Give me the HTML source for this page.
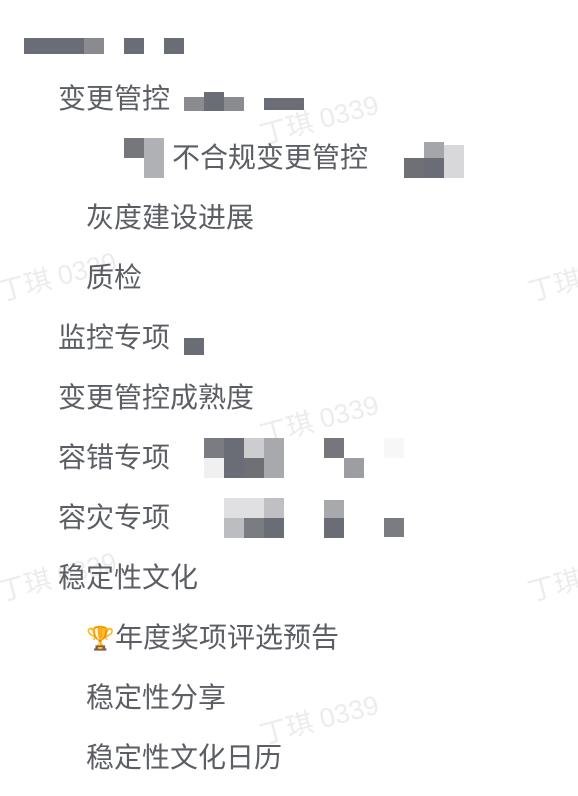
<!DOCTYPE html>
<html><head><meta charset="utf-8"><style>
html,body{margin:0;padding:0;background:#fff;width:578px;height:796px;overflow:hidden;position:relative}
.t{position:absolute;font-family:"Liberation Sans","Noto Sans CJK SC",sans-serif;font-size:28px;color:#5b5e64;line-height:32px;white-space:nowrap}
.b{position:absolute}
.w{position:absolute;font-family:"Liberation Sans","Noto Sans CJK SC",sans-serif;font-size:27px;color:#ececec;transform:rotate(-15deg);white-space:nowrap}
.e{font-size:23px;display:inline-block;width:29px;vertical-align:1px}
</style></head><body>
<div class="w" style="left:258px;top:98px">丁琪 0339</div>
<div class="w" style="left:-4px;top:255px">丁琪 0339</div>
<div class="w" style="left:526px;top:255px">丁琪 0339</div>
<div class="w" style="left:258px;top:398px">丁琪 0339</div>
<div class="w" style="left:-4px;top:555px">丁琪 0339</div>
<div class="w" style="left:526px;top:555px">丁琪 0339</div>
<div class="w" style="left:258px;top:698px">丁琪 0339</div>

<div class="b" style="left:24px;top:38px;width:60px;height:16px;background:#6a6d75"></div>
<div class="b" style="left:84px;top:38px;width:20px;height:16px;background:#8a8b8f"></div>
<div class="b" style="left:124px;top:38px;width:20px;height:16px;background:#6a6d75"></div>
<div class="b" style="left:164px;top:38px;width:20px;height:16px;background:#6a6d75"></div>

<div class="t" style="left:58px;top:83px">变更管控</div>
<div class="b" style="left:184px;top:97px;width:20px;height:14px;background:#8a8c90"></div>
<div class="b" style="left:204px;top:92px;width:20px;height:19px;background:#6a6d75"></div>
<div class="b" style="left:224px;top:97px;width:20px;height:14px;background:#8a8c90"></div>
<div class="b" style="left:264px;top:98px;width:40px;height:12px;background:#6a6d75"></div>

<div class="b" style="left:124px;top:138px;width:20px;height:20px;background:#75777d"></div>
<div class="b" style="left:144px;top:138px;width:20px;height:40px;background:#b0b1b4"></div>
<div class="t" style="left:172px;top:142px">不合规变更管控</div>
<div class="b" style="left:404px;top:158px;width:20px;height:20px;background:#6e7076"></div>
<div class="b" style="left:424px;top:142px;width:20px;height:16px;background:#a5a6aa"></div>
<div class="b" style="left:424px;top:158px;width:20px;height:20px;background:#6a6d75"></div>
<div class="b" style="left:444px;top:145px;width:20px;height:33px;background:#d8d8da"></div>

<div class="t" style="left:86px;top:202px">灰度建设进展</div>
<div class="t" style="left:86px;top:262px">质检</div>
<div class="t" style="left:58px;top:322px">监控专项</div>
<div class="b" style="left:184px;top:338px;width:20px;height:17px;background:#6a6d75"></div>
<div class="t" style="left:58px;top:382px">变更管控成熟度</div>

<div class="t" style="left:58px;top:442px">容错专项</div>
<div class="b" style="left:204px;top:438px;width:20px;height:20px;background:#7a7c82"></div>
<div class="b" style="left:224px;top:438px;width:20px;height:40px;background:#6a6d75"></div>
<div class="b" style="left:244px;top:438px;width:20px;height:20px;background:#cdcdcf"></div>
<div class="b" style="left:244px;top:458px;width:20px;height:20px;background:#6e7076"></div>
<div class="b" style="left:264px;top:438px;width:20px;height:40px;background:#a8a9ac"></div>
<div class="b" style="left:204px;top:458px;width:20px;height:20px;background:#f0f0f1"></div>
<div class="b" style="left:324px;top:438px;width:20px;height:20px;background:#75777c"></div>
<div class="b" style="left:344px;top:458px;width:20px;height:20px;background:#9c9ea2"></div>
<div class="b" style="left:384px;top:438px;width:20px;height:20px;background:#f7f7f7"></div>

<div class="t" style="left:58px;top:502px">容灾专项</div>
<div class="b" style="left:224px;top:498px;width:40px;height:20px;background:#e0e0e2"></div>
<div class="b" style="left:264px;top:498px;width:20px;height:20px;background:#c0c0c4"></div>
<div class="b" style="left:224px;top:518px;width:20px;height:20px;background:#bcbdc0"></div>
<div class="b" style="left:244px;top:518px;width:20px;height:20px;background:#7a7c82"></div>
<div class="b" style="left:264px;top:518px;width:20px;height:20px;background:#6a6d75"></div>
<div class="b" style="left:324px;top:500px;width:20px;height:18px;background:#a8a9ac"></div>
<div class="b" style="left:324px;top:518px;width:20px;height:20px;background:#6a6d75"></div>
<div class="b" style="left:384px;top:518px;width:20px;height:19px;background:#7a7c82"></div>

<div class="t" style="left:58px;top:562px">稳定性文化</div>
<div class="t" style="left:86px;top:622px"><span class="e">🏆</span>年度奖项评选预告</div>
<div class="t" style="left:86px;top:682px">稳定性分享</div>
<div class="t" style="left:86px;top:742px">稳定性文化日历</div>
</body></html>
